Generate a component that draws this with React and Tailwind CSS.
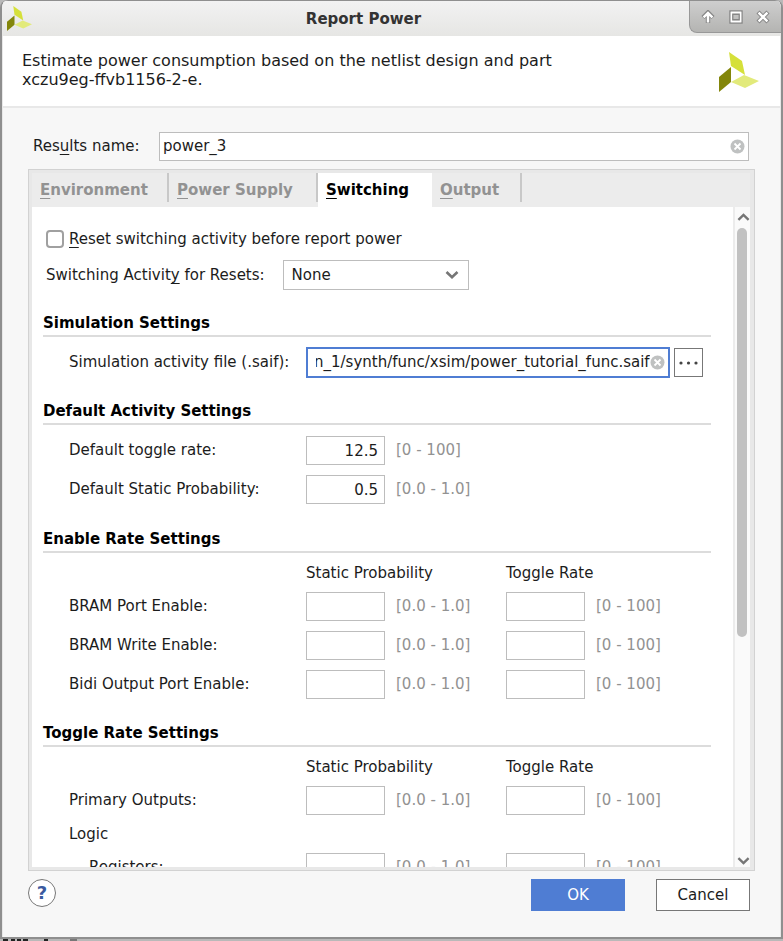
import { useLayoutEffect, useRef } from "react";

const FIELD =
  "h-[29px] border border-[#bdbdbd] bg-white text-[#1c1c1c] outline-none";

function Logo({ className }) {
  return (
    <svg className={className} viewBox="0 0 40 40" aria-hidden="true">
      <polygon points="10,0 23,9 26,23 12,14" fill="#d5e03a" />
      <polygon points="0,25 12,15 12,30 0,40" fill="#83860b" />
      <polygon points="12,30 25,23 40,29 26,36" fill="#e2ea7b" />
    </svg>
  );
}

function Key({ children }) {
  return (
    <span className="underline decoration-1 underline-offset-3 [text-decoration-skip-ink:none]">
      {children}
    </span>
  );
}

function ClearIcon() {
  return (
    <svg className="size-[15px]" viewBox="0 0 15 15" aria-hidden="true">
      <circle cx="7.5" cy="7.5" r="7" fill="#bfc1c1" />
      <path d="M4.5 4.5l6 6M10.5 4.5l-6 6" stroke="#fff" strokeWidth="1.8" />
    </svg>
  );
}

function Chevron({ up }) {
  return (
    <svg className="h-2 w-[14px]" viewBox="0 0 14 8" fill="none" aria-hidden="true">
      <path
        d={up ? "M1.5 7L7 1.8L12.5 7" : "M1.5 1L7 6.2L12.5 1"}
        stroke="#767676"
        strokeWidth="2.6"
      />
    </svg>
  );
}

function TitleBar() {
  return (
    <header className="flex h-9 shrink-0 border-t border-[#8f8f8f] bg-linear-to-b from-[#f2f2f2] to-[#e6e6e4]">
      <div className="flex w-9 shrink-0 items-start pt-[5px] pl-[5px]">
        <Logo className="size-[25px]" />
      </div>
      <h1 className="flex-1 pt-2 text-center text-[15px] leading-5 font-bold text-[#333]">
        Report Power
      </h1>
      <div className="flex h-8 w-[92px] shrink-0 items-center justify-between rounded-bl-lg border-b border-l border-[#989898] bg-linear-to-b from-[#cecece] to-[#b4b4b2] px-[11px]">
        <button type="button" aria-label="Shade" className="size-[14px]">
          <svg viewBox="0 0 14 14" aria-hidden="true">
            <path
              d="M7 1.5V13M2 7.5L7 2.5L12 7.5"
              fill="none"
              stroke="#868686"
              strokeWidth="4.4"
            />
            <path
              d="M7 2.5V12.4M2.6 7.4L7 3L11.4 7.4"
              fill="none"
              stroke="#fff"
              strokeWidth="2.4"
            />
          </svg>
        </button>
        <button type="button" aria-label="Maximize" className="size-[14px]">
          <svg viewBox="0 0 14 14" fill="none" aria-hidden="true">
            <rect x="1" y="1" width="12" height="12" stroke="#868686" strokeWidth="1.4" />
            <rect x="2.4" y="2.4" width="9.2" height="9.2" stroke="#fff" strokeWidth="1.6" />
            <rect x="3.8" y="4.4" width="6.4" height="5.2" stroke="#868686" strokeWidth="1.2" />
          </svg>
        </button>
        <button type="button" aria-label="Close" className="size-[14px]">
          <svg viewBox="0 0 14 14" fill="none" aria-hidden="true">
            <path d="M2 2L12 12M12 2L2 12" stroke="#868686" strokeWidth="4.4" />
            <path d="M2.6 2.6L11.4 11.4M11.4 2.6L2.6 11.4" stroke="#fff" strokeWidth="2.4" />
          </svg>
        </button>
      </div>
    </header>
  );
}

function Tab({ letter, rest, selected, className }) {
  return (
    <button
      type="button"
      role="tab"
      aria-selected={selected}
      className={
        "flex h-[34px] items-start text-[15px] font-bold " +
        (selected ? "bg-white text-black " : "text-[#929292] ") +
        className
      }
    >
      <span
        className={
          "flex h-[29px] w-full items-end pb-[2px] pl-2 leading-5 " +
          (selected ? "" : "border-r-2 border-[#c8c8c8]")
        }
      >
        <span>
          <Key>{letter}</Key>
          {rest}
        </span>
      </span>
    </button>
  );
}

function Section({ title, children }) {
  return (
    <section>
      <h2 className="border-b-2 border-[#dcdcdc] pb-[2px] text-[15px] leading-5 font-bold text-black">
        {title}
      </h2>
      {children}
    </section>
  );
}

function NumberField({ id, label, value, range }) {
  return (
    <div className="flex items-center gap-[11px]">
      <input
        id={id}
        aria-label={label}
        defaultValue={value}
        className={FIELD + " w-[79px] px-[6px] text-right"}
      />
      <span className="whitespace-nowrap text-[#929292]">{range}</span>
    </div>
  );
}

const COLUMNS = "grid grid-cols-[237px_200px_auto] items-center pl-[26px]";

function DefaultRow({ id, label, value, range }) {
  return (
    <div className={COLUMNS}>
      <label htmlFor={id}>{label}</label>
      <NumberField id={id} value={value} range={range} />
    </div>
  );
}

function ColumnHeads() {
  return (
    <div className={COLUMNS + " pt-[10px] pb-[9px] leading-5"}>
      <span className="col-start-2">Static Probability</span>
      <span>Toggle Rate</span>
    </div>
  );
}

function RateRow({ label, nested }) {
  return (
    <div className={COLUMNS}>
      <span className={nested ? "pl-5" : ""}>{label}</span>
      <NumberField label={label + " static probability"} range="[0.0 - 1.0]" />
      <NumberField label={label + " toggle rate"} range="[0 - 100]" />
    </div>
  );
}

function SwitchingPanel() {
  const file = useRef(null);
  useLayoutEffect(() => {
    file.current.scrollLeft = file.current.scrollWidth;
  }, []);

  return (
    <div className="min-w-0 flex-1 overflow-hidden pt-[22px] pr-[22px] pl-[11px]">
      <div className="flex items-center pl-[3px]">
        <input
          id="reset"
          type="checkbox"
          className="size-[18px] appearance-none rounded-[4px] border-2 border-[#a0a0a0] bg-white"
        />
        <label htmlFor="reset" className="pl-[5px] leading-5">
          <Key>R</Key>eset switching activity before report power
        </label>
      </div>
      <div className="flex items-center gap-[18px] pt-[11px] pl-[3px]">
        <label htmlFor="resets">
          Switching Activit<Key>y</Key> for Resets:
        </label>
        <div className="relative">
          <select
            id="resets"
            className="h-[30px] w-[186px] appearance-none border border-[#bdbdbd] bg-white px-2 outline-none"
          >
            <option>None</option>
          </select>
          <span className="pointer-events-none absolute inset-y-0 right-[10px] flex items-center">
            <Chevron />
          </span>
        </div>
      </div>

      <div className="flex flex-col gap-[23px] pt-[23px]">
        <Section title="Simulation Settings">
          <div className="flex items-center gap-1 pt-[10px] pr-2 pl-[26px]">
            <label htmlFor="saif" className="w-[233px] shrink-0">
              Simulation activity file (.saif):
            </label>
            <div className="flex h-[31px] min-w-0 flex-1 items-center border-2 border-[#4f7dd3] bg-white pr-[3px] pl-2">
              <input
                id="saif"
                ref={file}
                defaultValue="n_1/synth/func/xsim/power_tutorial_func.saif"
                className="min-w-0 flex-1 outline-none"
              />
              <button type="button" aria-label="Clear file">
                <ClearIcon />
              </button>
            </div>
            <button
              type="button"
              aria-label="Browse"
              className="flex size-[29px] items-center justify-center border border-[#777] bg-white"
            >
              <svg className="h-1 w-[19px]" viewBox="0 0 19 4" fill="#444" aria-hidden="true">
                <circle cx="2" cy="2" r="1.6" />
                <circle cx="9.5" cy="2" r="1.6" />
                <circle cx="17" cy="2" r="1.6" />
              </svg>
            </button>
          </div>
        </Section>

        <Section title="Default Activity Settings">
          <div className="flex flex-col gap-[10px] pt-[11px] pb-[2px]">
            <DefaultRow id="toggle" label="Default toggle rate:" value="12.5" range="[0 - 100]" />
            <DefaultRow
              id="static"
              label="Default Static Probability:"
              value="0.5"
              range="[0.0 - 1.0]"
            />
          </div>
        </Section>

        <Section title="Enable Rate Settings">
          <ColumnHeads />
          <div className="flex flex-col gap-[10px] pb-px">
            <RateRow label="BRAM Port Enable:" />
            <RateRow label="BRAM Write Enable:" />
            <RateRow label="Bidi Output Port Enable:" />
          </div>
        </Section>

        <Section title="Toggle Rate Settings">
          <ColumnHeads />
          <RateRow label="Primary Outputs:" />
          <p className="py-[9px] pl-[26px] leading-5">Logic</p>
          <RateRow label="Registers:" nested />
        </Section>
      </div>
    </div>
  );
}

function ScrollBar() {
  return (
    <div className="flex w-[17px] shrink-0 flex-col border-l-2 border-[#ececec] bg-[#fafafa] pt-[6px] pb-[2px] pl-[2px]">
      <button type="button" aria-label="Scroll up" className="flex h-[15px] items-start">
        <Chevron up />
      </button>
      <div className="w-[10px] flex-1">
        <div className="h-[65%] rounded-full bg-[#c1c1c1]" />
      </div>
      <button type="button" aria-label="Scroll down" className="flex h-2 items-end">
        <Chevron />
      </button>
    </div>
  );
}

export default function App() {
  return (
    <div className="flex h-screen flex-col bg-[#b9b9b9] font-['DejaVu_Sans',sans-serif] text-[15px] text-[#1c1c1c]">
      <main className="flex min-h-0 flex-1 flex-col overflow-hidden rounded-t-lg border-x-2 border-b-2 border-[#8f8f8f] bg-[#f7f7f7]">
        <TitleBar />
        <div className="flex shrink-0 items-start justify-between border-x border-b-2 border-[#e8e8e8] bg-white pt-[15px] pr-[21px] pb-[14px] pl-[19px]">
          <p className="max-w-[560px] text-base leading-[19px]">
            Estimate power consumption based on the netlist design and part xczu9eg-ffvb1156-2-e.
          </p>
          <Logo className="mt-px size-10 shrink-0" />
        </div>

        <div className="flex min-h-0 flex-1 flex-col border-x border-[#e8e8e8] px-[25px] pt-6 pb-[26px]">
          <div className="flex shrink-0 items-center pr-[6px] pl-[5px]">
            <label htmlFor="results" className="w-[126px] shrink-0">
              Res<Key>u</Key>lts name:
            </label>
            <div className={FIELD + " flex min-w-0 flex-1 items-center px-[3px]"}>
              <input
                id="results"
                defaultValue="power_3"
                className="min-w-0 flex-1 outline-none"
              />
              <button type="button" aria-label="Clear name">
                <ClearIcon />
              </button>
            </div>
          </div>

          <div className="mt-2 flex min-h-0 flex-1 flex-col border border-[#d2d2d2] bg-[#e8e8e8] py-[3px] pr-1 pl-[3px]">
            <div role="tablist" className="flex shrink-0 bg-[#ececec]">
              <Tab letter="E" rest="nvironment" className="w-[137px]" />
              <Tab letter="P" rest="ower Supply" className="w-[149px]" />
              <Tab letter="S" rest="witching" className="w-[114px]" selected />
              <Tab letter="O" rest="utput" className="w-[90px]" />
            </div>
            <div role="tabpanel" className="flex min-h-0 flex-1 bg-white">
              <SwitchingPanel />
              <ScrollBar />
            </div>
          </div>

          <div className="flex shrink-0 items-start gap-[31px] pt-2 pr-[5px]">
            <button
              type="button"
              aria-label="Help"
              className="mr-auto flex size-7 items-center justify-center rounded-full border border-[#777] bg-white text-[18px] leading-none font-bold text-[#3a5a9f]"
            >
              ?
            </button>
            <button type="button" className="h-8 w-[94px] bg-[#4f7dd3] text-white">
              OK
            </button>
            <button type="button" className="h-8 w-[94px] border border-[#777] bg-white">
              Cancel
            </button>
          </div>
        </div>
      </main>
      <svg className="h-[2px] w-full shrink-0" aria-hidden="true">
        <path d="M3 1h5M11 1h4M17 1h4M23 1h5M44 1h4" stroke="#222" strokeWidth="2" />
        <path d="M70 1h7" stroke="#777" strokeWidth="2" />
      </svg>
    </div>
  );
}
